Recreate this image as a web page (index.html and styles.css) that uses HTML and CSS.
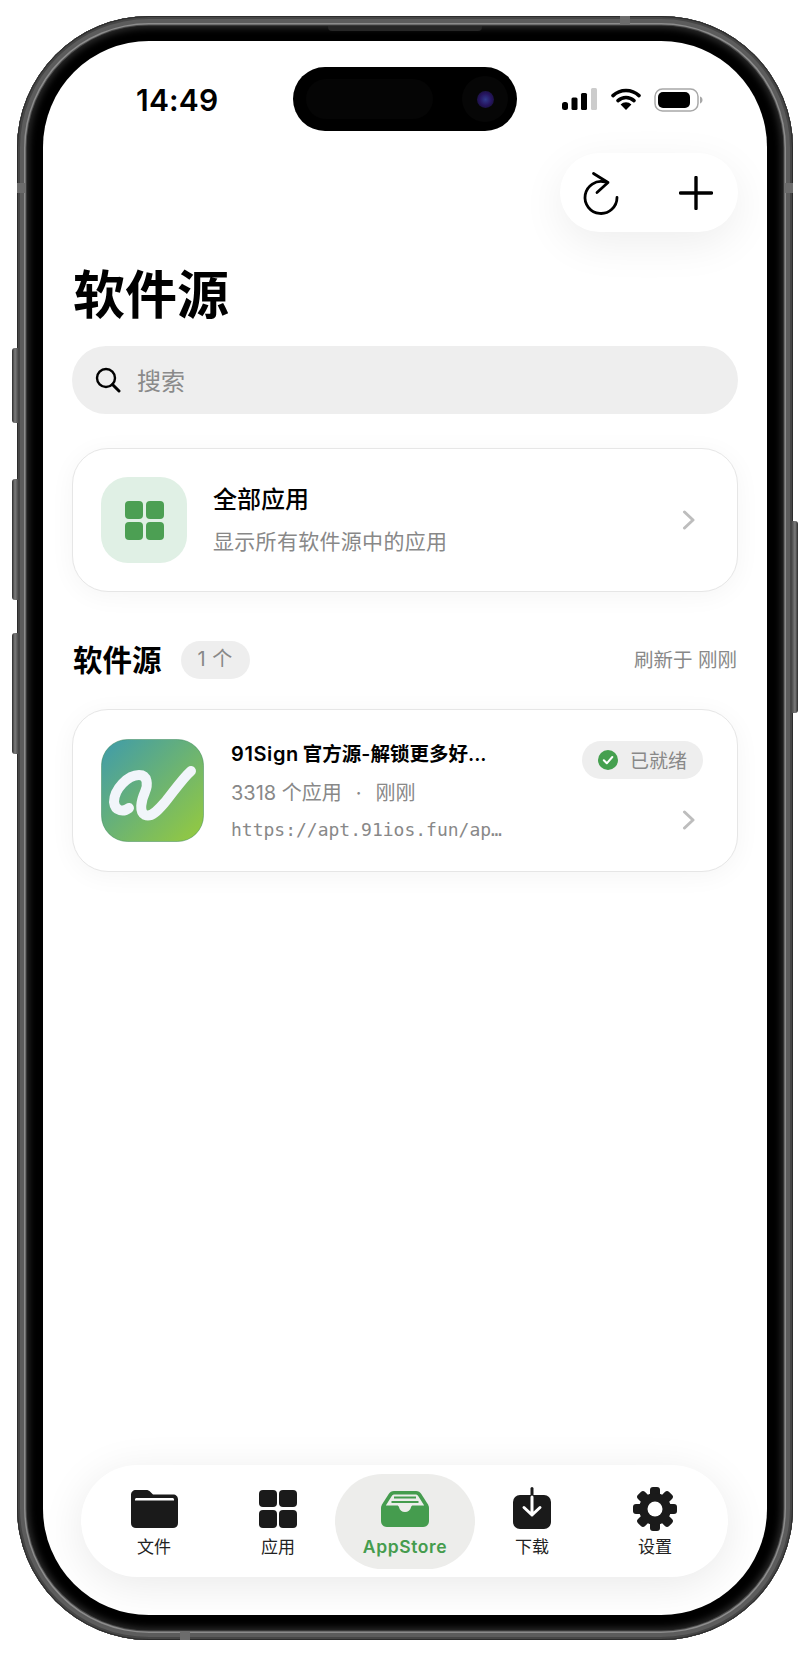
FILE: index.html
```html
<!DOCTYPE html>
<html lang="zh">

<head>
    <meta charset="UTF-8">
    <meta name="viewport" content="width=device-width, initial-scale=1.0">
    <title>软件源</title>
    <link rel="stylesheet" href="styles.css">
</head>

<body>
    <div class="phone">
        <span class="side-btn side-btn-1"></span>
        <span class="side-btn side-btn-2"></span>
        <span class="side-btn side-btn-3"></span>
        <span class="side-btn side-btn-4"></span>
        <span class="band band-left"></span>
        <span class="band band-right"></span>
        <span class="band band-top"></span>
        <span class="band band-bottom"></span>
        <span class="speaker"></span>

        <div class="screen">
            <div class="island">
                <span class="island-sensor"></span>
                <span class="island-camera"><span class="island-lens"></span></span>
            </div>

            <div class="status">
                <span class="time">14:49</span>
                <div class="status-icons">
                    <svg width="35" height="23" viewBox="0 0 35 23">
                        <rect x="0" y="14" width="6" height="8" rx="2.5" fill="#000" />
                        <rect x="9.5" y="9.5" width="6" height="12.5" rx="1.5" fill="#000" />
                        <rect x="19" y="5" width="6" height="17" rx="1.5" fill="#000" />
                        <rect x="29" y="0" width="6" height="22" rx="1.5" fill="#ccc" />
                    </svg>
                    <svg width="30" height="22" viewBox="0 0 30 22">
                        <path d="M2 7.6a19 19 0 0 1 26 0" fill="none" stroke="#000" stroke-width="3.6" stroke-linecap="round" />
                        <path d="M7 12.6a12 12 0 0 1 16 0" fill="none" stroke="#000" stroke-width="3.6" stroke-linecap="round" />
                        <path d="M15 22 9.6 16.6a7.5 7.5 0 0 1 10.8 0Z" fill="#000" />
                    </svg>
                    <svg width="49" height="24" viewBox="0 0 49 24">
                        <rect x="1" y="1" width="43" height="22" rx="7.5" fill="#fff" stroke="#a8a8a8" stroke-width="1.5" />
                        <rect x="4" y="4" width="32" height="16" rx="5" fill="#000" />
                        <path d="M46 8.5c1.6.6 2.500 1.900 2.500 3.500s-.9 2.900-2.500 3.500Z" fill="#a8a8a8" />
                    </svg>
                </div>
            </div>

            <div class="main">
                <div class="actions-row">
                    <div class="actions">
                        <svg width="40" height="46" viewBox="0 0 40 46">
                            <path d="M36 27.500A16 16 0 1 1 24 12" fill="none" stroke="#000" stroke-width="2.800" stroke-linecap="round" />
                            <path d="M12.500 3.500 27 12.500 16 22.500" fill="none" stroke="#000" stroke-width="2.800" stroke-linecap="round" stroke-linejoin="round" />
                        </svg>
                        <svg width="34" height="34" viewBox="0 0 34 34">
                            <path d="M17 1.500v31M1.500 17h31" fill="none" stroke="#000" stroke-width="3.400" stroke-linecap="round" />
                        </svg>
                    </div>
                </div>

                <h1 class="page-title">软件源</h1>

                <div class="search">
                    <svg width="26" height="26" viewBox="0 0 26 26">
                        <circle cx="11" cy="11" r="9" fill="none" stroke="#000" stroke-width="2.400" />
                        <path d="M17.500 17.500 24 24" fill="none" stroke="#000" stroke-width="3" stroke-linecap="round" />
                    </svg>
                    <span>搜索</span>
                </div>

                <div class="card card-all">
                    <div class="all-icon">
                        <span></span><span></span><span></span><span></span>
                    </div>
                    <div class="card-text">
                        <div class="all-title">全部应用</div>
                        <div class="all-sub">显示所有软件源中的应用</div>
                    </div>
                    <svg class="chevron" width="14" height="20" viewBox="0 0 14 20">
                        <path d="M2.500 2 11 10l-8.500 8" fill="none" stroke="#bdbdbd" stroke-width="3" stroke-linecap="round" stroke-linejoin="round" />
                    </svg>
                </div>

                <div class="section-head">
                    <span class="section-title">软件源</span>
                    <span class="count">1 个</span>
                    <span class="refreshed">刷新于 刚刚</span>
                </div>

                <div class="card card-source">
                    <svg class="source-logo" width="103" height="103" viewBox="0 0 103 103">
                        <defs>
                            <linearGradient id="logo-bg" x1="0" y1="0" x2="1" y2="1">
                                <stop offset="0" stop-color="#3f9bab" />
                                <stop offset="1" stop-color="#97cb3c" />
                            </linearGradient>
                        </defs>
                        <rect x="0.5" y="0.5" width="102" height="102" rx="26" fill="url(#logo-bg)" stroke="#3d8a5a" stroke-opacity="0.5" />
                        <path d="M28 69C23 73 14 73 13 63 13 50 27 36 38 36 47 36 47 46 44 53 40 62 38 73 44 76 51 79 58 70 65 62 73 52 82 39 90 32" fill="none" stroke="#f1f5fa" stroke-width="10" stroke-linecap="round" stroke-linejoin="round" />
                    </svg>
                    <div class="source-body">
                        <div class="source-name"><span class="latin">91Sign</span>官方源-解锁更多好...</div>
                        <div class="source-meta">3318 个应用<span class="dot">·</span>刚刚</div>
                        <div class="source-url">https://apt.91ios.fun/ap…</div>
                    </div>
                    <div class="source-side">
                        <div class="ready">
                            <svg width="20" height="20" viewBox="0 0 20 20">
                                <circle cx="10" cy="10" r="10" fill="#45a04f" />
                                <path d="M5.800 10.300 8.800 13.300 14.300 7" fill="none" stroke="#fff" stroke-width="2" stroke-linecap="round" stroke-linejoin="round" />
                            </svg>
                            <span>已就绪</span>
                        </div>
                        <svg class="chevron" width="14" height="20" viewBox="0 0 14 20">
                            <path d="M2.500 2 11 10l-8.500 8" fill="none" stroke="#bdbdbd" stroke-width="3" stroke-linecap="round" stroke-linejoin="round" />
                        </svg>
                    </div>
                </div>
            </div>

            <div class="tabbar">
                <div class="tab">
                    <div class="tab-icon">
                        <svg width="47" height="38" viewBox="0 0 47 38">
                            <path d="M5 0h10c2 0 3 .6 4.500 2L22 4.500h20c3 0 5 2 5 5V33c0 3-2 5-5 5H5c-3 0-5-2-5-5V5c0-3 2-5 5-5Z" fill="#1a1a1a" />
                            <path d="M4 10.500V9.500C4 8.700 4.700 8 5.500 8h36c.8 0 1.500.7 1.500 1.500v1Z" fill="#fff" />
                        </svg>
                    </div>
                    <span>文件</span>
                </div>
                <div class="tab tab-second">
                    <div class="tab-icon">
                        <div class="grid-icon">
                            <span></span><span></span><span></span><span></span>
                        </div>
                    </div>
                    <span>应用</span>
                </div>
                <div class="tab tab-active">
                    <div class="tab-icon">
                        <svg width="48" height="36" viewBox="0 0 48 36">
                            <path d="M13 0h22c2.500 0 4 1 5.300 3L47 13.500c.7 1.100 1 2.200 1 3.500v13c0 3.500-2.500 6-6 6H6c-3.500 0-6-2.500-6-6V17c0-1.300.3-2.400 1-3.500L7.700 3C9 1 10.500 0 13 0Z" fill="#459c4e" />
                            <path d="M13.500 3.500h21c1.200 0 2 .5 2.700 1.500l6 9.500H32c-1 0-1.800.7-2 1.700-.6 2.800-3 4.800-6 4.800s-5.400-2-6-4.800c-.2-1-1-1.700-2-1.700H4.800l6-9.500c.7-1 1.500-1.500 2.700-1.500Z" fill="#ededeb" />
                            <path d="M13 6.500h22M10.500 11h27" fill="none" stroke="#459c4e" stroke-width="2" />
                        </svg>
                    </div>
                    <span>AppStore</span>
                </div>
                <div class="tab">
                    <div class="tab-icon">
                        <svg width="38" height="44" viewBox="0 0 38 44">
                            <rect x="0" y="8" width="38" height="34" rx="7" fill="#1a1a1a" />
                            <path d="M19 1.500V12" fill="none" stroke="#1a1a1a" stroke-width="3" stroke-linecap="round" />
                            <path d="M19 10V28M11 20.500 19 28 27 20.500" fill="none" stroke="#fff" stroke-width="3" stroke-linecap="round" stroke-linejoin="round" />
                        </svg>
                    </div>
                    <span>下载</span>
                </div>
                <div class="tab">
                    <div class="tab-icon">
                        <svg width="44" height="44" viewBox="-22 -22 44 44">
                            <g fill="#1a1a1a">
                                <rect x="-5" y="-22" width="10" height="12" rx="3" />
                                <rect x="-5" y="-22" width="10" height="12" rx="3" transform="rotate(45)" />
                                <rect x="-5" y="-22" width="10" height="12" rx="3" transform="rotate(90)" />
                                <rect x="-5" y="-22" width="10" height="12" rx="3" transform="rotate(135)" />
                                <rect x="-5" y="-22" width="10" height="12" rx="3" transform="rotate(180)" />
                                <rect x="-5" y="-22" width="10" height="12" rx="3" transform="rotate(225)" />
                                <rect x="-5" y="-22" width="10" height="12" rx="3" transform="rotate(270)" />
                                <rect x="-5" y="-22" width="10" height="12" rx="3" transform="rotate(315)" />
                                <circle r="16" />
                            </g>
                            <circle r="7.500" fill="#fff" />
                        </svg>
                    </div>
                    <span>设置</span>
                </div>
            </div>
        </div>
    </div>
</body>

</html>
```

FILE: styles.css
```css
* {
    box-sizing: border-box;
}

body {
    margin: 0;
    padding: 16px 17px;
    background: #fff;
    font-family: Inter, "Noto Sans CJK SC", sans-serif;
    color: #000;
}

/* phone frame */
.phone {
    position: relative;
    width: 776px;
    height: 1624px;
    padding: 25px 26px;
    background: #000;
    border-radius: 132px;
    box-shadow:
        inset 0 0 0 1px #2c2c2c,
        inset 0 0 0 3px #464646,
        inset 0 0 0 7px #5c5c5c,
        inset 0 0 0 8.500px #8c8c8c,
        inset 0 0 0 9.500px #4c4c4c,
        inset 0 0 7px 12px #2c2c2c;
}

.side-btn {
    position: absolute;
    width: 6px;
    background: linear-gradient(90deg, #2c2c2c, #7c7c7c 50%, #4c4c4c);
    border-radius: 3px 0 0 3px;
}

.side-btn-1 {
    left: -5px;
    top: 332px;
    height: 75px;
}

.side-btn-2 {
    left: -5px;
    top: 463px;
    height: 121px;
}

.side-btn-3 {
    left: -5px;
    top: 617px;
    height: 121px;
}

.side-btn-4 {
    right: -5px;
    top: 505px;
    height: 192px;
    background: linear-gradient(270deg, #2c2c2c, #7c7c7c 50%, #4c4c4c);
    border-radius: 0 3px 3px 0;
}

.band {
    position: absolute;
    background: #6c6c6c;
}

.band-left {
    left: 0;
    top: 167px;
    width: 9px;
    height: 10px;
}

.band-right {
    right: 0;
    top: 167px;
    width: 9px;
    height: 10px;
}

.band-top {
    top: 0;
    left: 603px;
    width: 10px;
    height: 9px;
}

.band-bottom {
    bottom: 0;
    left: 163px;
    width: 10px;
    height: 9px;
}

.speaker {
    position: absolute;
    top: 10px;
    left: 311px;
    width: 154px;
    height: 5px;
    background: #262626;
    border-radius: 0 0 4px 4px;
}

.screen {
    position: relative;
    width: 724px;
    height: 1574px;
    display: flex;
    flex-direction: column;
    background: #fff;
    border-radius: 106px;
    overflow: hidden;
}

.island {
    position: absolute;
    top: 26px;
    left: 250px;
    width: 224px;
    height: 64px;
    display: flex;
    align-items: center;
    justify-content: space-between;
    padding: 0 9px 0 13px;
    background: #000;
    border-radius: 32px;
}

.island-sensor {
    width: 127px;
    height: 40px;
    background: #050505;
    border-radius: 20px;
}

.island-camera {
    width: 46px;
    height: 46px;
    display: flex;
    align-items: center;
    justify-content: center;
    background: #060606;
    border-radius: 50%;
}

.island-lens {
    width: 17px;
    height: 17px;
    background: radial-gradient(circle, #2f3a8c 0, #26145e 50%, #0c1022 100%);
    border-radius: 50%;
}

/* status bar */
.status {
    height: 112px;
    display: flex;
    justify-content: space-between;
    padding: 47px 64px 0 93px;
}

.time {
    font-size: 30px;
    font-weight: 600;
    letter-spacing: 0.2px;
    line-height: 24px;
}

.status-icons {
    display: flex;
    align-items: flex-start;
    gap: 13.500px;
}

.main {
    flex: 1;
    padding: 0 29px;
}

.actions-row {
    display: flex;
    justify-content: flex-end;
}

.actions {
    width: 178px;
    height: 79px;
    display: flex;
    align-items: center;
    justify-content: space-between;
    padding: 0 25px 0 21px;
    background: #fff;
    border-radius: 40px;
    box-shadow: 0 12px 44px rgba(0, 0, 0, 0.07);
}

.page-title {
    margin: 38px 0 0;
    padding-left: 1px;
    font-size: 52px;
    font-weight: 700;
    line-height: 52px;
}

.search {
    height: 68px;
    margin-top: 24px;
    display: flex;
    align-items: center;
    gap: 16px;
    padding: 0 23px 2px;
    font-size: 24px;
    color: #8a8a8a;
    background: #eee;
    border-radius: 34px;
}

.search svg {
    margin-top: 2px;
}

.card {
    display: flex;
    background: #fff;
    border: 1.500px solid #e6e6e6;
    border-radius: 36px;
    box-shadow: 0 4px 26px rgba(0, 0, 0, 0.045);
}

.card-all {
    height: 144px;
    margin-top: 34px;
    align-items: center;
    padding: 0 41px 0 28px;
}

.all-icon {
    width: 86px;
    height: 86px;
    display: grid;
    grid-template-columns: 18px 18px;
    grid-auto-rows: 18px;
    gap: 3px;
    align-content: center;
    justify-content: center;
    background: #e0f0e5;
    border-radius: 27px;
}

.all-icon span {
    background: #4c9f53;
    border-radius: 4px;
}

.card-text {
    flex: 1;
    margin-left: 26px;
}

.all-title {
    font-size: 24px;
    font-weight: 500;
    line-height: 32px;
}

.all-sub {
    margin-top: 12px;
    font-size: 21px;
    letter-spacing: 0.3px;
    line-height: 28px;
    color: #888;
}

.section-head {
    display: flex;
    align-items: center;
    margin-top: 49px;
    height: 38px;
    line-height: 36px;
}

.section-title {
    padding-left: 1px;
    font-size: 29.500px;
    font-weight: 700;
}

.count {
    height: 38px;
    margin-left: 19px;
    padding: 0 17px;
    font-size: 20px;
    letter-spacing: 0.5px;
    line-height: 37px;
    color: #888;
    background: #eee;
    border-radius: 19px;
}

.refreshed {
    margin-left: auto;
    padding-right: 1px;
    font-size: 19.500px;
    color: #888;
}

.card-source {
    height: 163px;
    margin-top: 30px;
    padding: 28.500px 34px 28.500px 28px;
}

.source-logo {
    flex-shrink: 0;
}

.source-body {
    flex: 1;
    margin-left: 27px;
}

.source-name {
    font-size: 19.500px;
    font-weight: 600;
    line-height: 30px;
}

.latin {
    margin-right: 4px;
    font-size: 20px;
    letter-spacing: 0.6px;
}

.source-meta {
    margin-top: 10px;
    font-size: 20px;
    line-height: 28px;
    color: #888;
}

.dot {
    margin: 0 14px;
}

.source-url {
    margin-top: 9px;
    font-family: "DejaVu Sans Mono", monospace;
    font-size: 18px;
    line-height: 28px;
    color: #888;
}

.source-side {
    display: flex;
    flex-direction: column;
    align-items: flex-end;
    justify-content: flex-start;
    gap: 31px;
    height: 100%;
    padding-top: 2px;
}

.source-side .chevron {
    margin-right: 7px;
}

.ready {
    height: 38px;
    display: flex;
    align-items: center;
    gap: 12px;
    padding: 0 16px;
    font-size: 19px;
    color: #888;
    background: #eee;
    border-radius: 19px;
}

/* bottom tabs */
.tabbar {
    height: 112px;
    margin: 0 39px 38px 38px;
    display: grid;
    grid-template-columns: 124px 119px 140px 114px 132px;
    align-items: center;
    padding-left: 11px;
    background: #fff;
    border-radius: 56px;
    box-shadow: 0 8px 44px rgba(0, 0, 0, 0.09);
}

.tab {
    height: 95px;
    display: flex;
    flex-direction: column;
    align-items: center;
    gap: 6px;
    padding-top: 13px;
    font-size: 17px;
    line-height: 20px;
    color: #222;
}

.tab-second {
    padding-left: 5px;
}

.tab-icon {
    height: 44px;
    display: flex;
    align-items: center;
    justify-content: center;
}

.tab-active {
    font-size: 17.500px;
    font-weight: 600;
    letter-spacing: 0.6px;
    color: #459c4e;
    background: #ededeb;
    border-radius: 48px;
}

.grid-icon {
    width: 38px;
    height: 38px;
    display: grid;
    grid-template-columns: 1fr 1fr;
    gap: 2.500px;
}

.grid-icon span {
    background: #1a1a1a;
    border-radius: 4px;
}
```
